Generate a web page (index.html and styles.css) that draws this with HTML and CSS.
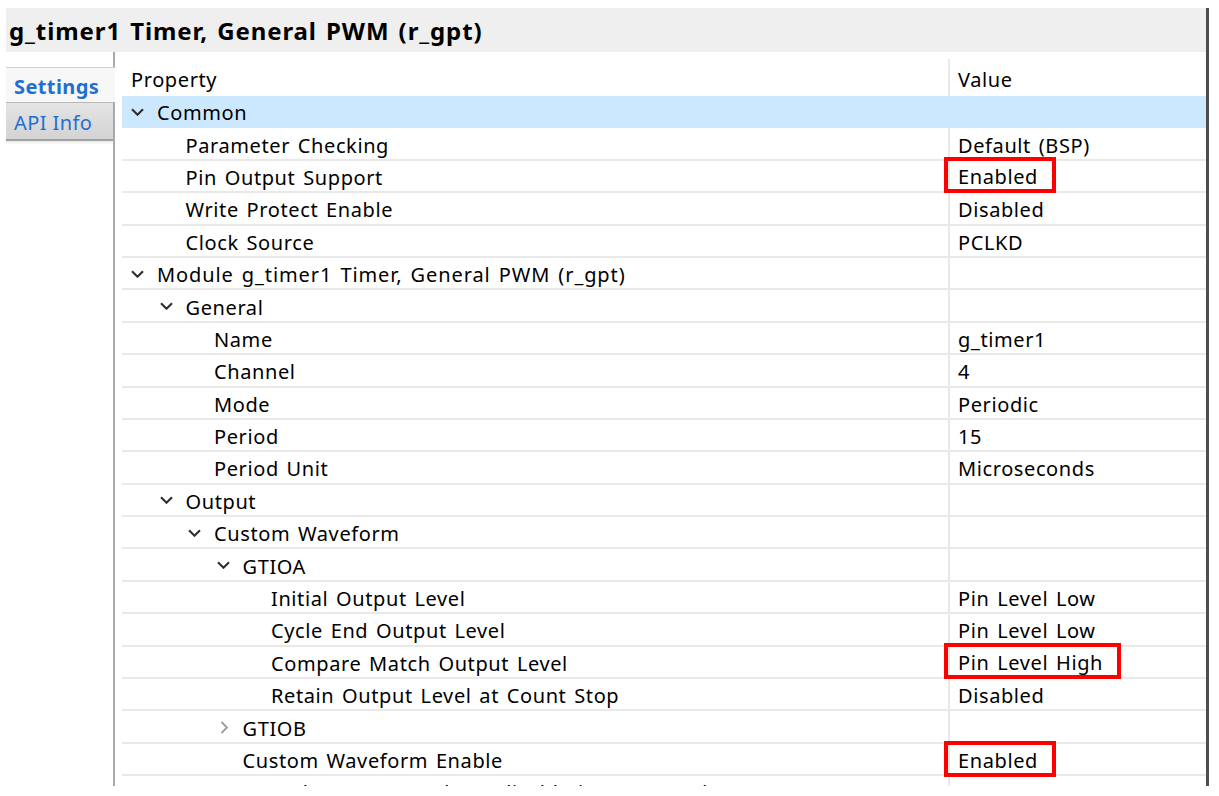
FILE: index.html
```html
<!DOCTYPE html>
<html>
<head>
<meta charset="utf-8">
<link rel="stylesheet" href="styles.css">
</head>
<body>
<div class="panel">
  <div class="title">g_timer1 Timer, General PWM (r_gpt)</div>
  <div class="main">
    <div class="tabs">
      <div class="tab active">Settings</div>
      <div class="tab api">API Info</div>
    </div>
    <div class="table">
      <div class="head">
        <div class="prop">Property</div>
        <div class="val">Value</div>
      </div>

      <div class="row sel lv0"><div class="prop"><span class="tg"><svg class="down" width="13" height="8" viewBox="0 0 13 8"><path d="M1 1.2 6.5 6.7 12 1.2"/></svg></span><span>Common</span></div><div class="val"></div></div>
      <div class="row lv1"><div class="prop"><span class="tg"></span><span>Parameter Checking</span></div><div class="val">Default (BSP)</div></div>
      <div class="row lv1"><div class="prop"><span class="tg"></span><span>Pin Output Support</span></div><div class="val"><span class="mark">Enabled</span></div></div>
      <div class="row lv1"><div class="prop"><span class="tg"></span><span>Write Protect Enable</span></div><div class="val">Disabled</div></div>
      <div class="row lv1"><div class="prop"><span class="tg"></span><span>Clock Source</span></div><div class="val">PCLKD</div></div>
      <div class="row lv0"><div class="prop"><span class="tg"><svg class="down" width="13" height="8" viewBox="0 0 13 8"><path d="M1 1.2 6.5 6.7 12 1.2"/></svg></span><span class="long">Module g_timer1 Timer, General PWM (r_gpt)</span></div><div class="val"></div></div>
      <div class="row lv1"><div class="prop"><span class="tg"><svg class="down" width="13" height="8" viewBox="0 0 13 8"><path d="M1 1.2 6.5 6.7 12 1.2"/></svg></span><span>General</span></div><div class="val"></div></div>
      <div class="row lv2"><div class="prop"><span class="tg"></span><span>Name</span></div><div class="val">g_timer1</div></div>
      <div class="row lv2"><div class="prop"><span class="tg"></span><span>Channel</span></div><div class="val">4</div></div>
      <div class="row lv2"><div class="prop"><span class="tg"></span><span>Mode</span></div><div class="val">Periodic</div></div>
      <div class="row lv2"><div class="prop"><span class="tg"></span><span>Period</span></div><div class="val">15</div></div>
      <div class="row lv2"><div class="prop"><span class="tg"></span><span>Period Unit</span></div><div class="val">Microseconds</div></div>
      <div class="row lv1"><div class="prop"><span class="tg"><svg class="down" width="13" height="8" viewBox="0 0 13 8"><path d="M1 1.2 6.5 6.7 12 1.2"/></svg></span><span>Output</span></div><div class="val"></div></div>
      <div class="row lv2"><div class="prop"><span class="tg"><svg class="down" width="13" height="8" viewBox="0 0 13 8"><path d="M1 1.2 6.5 6.7 12 1.2"/></svg></span><span>Custom Waveform</span></div><div class="val"></div></div>
      <div class="row lv3"><div class="prop"><span class="tg"><svg class="down" width="13" height="8" viewBox="0 0 13 8"><path d="M1 1.2 6.5 6.7 12 1.2"/></svg></span><span>GTIOA</span></div><div class="val"></div></div>
      <div class="row lv4"><div class="prop"><span class="tg"></span><span>Initial Output Level</span></div><div class="val">Pin Level Low</div></div>
      <div class="row lv4"><div class="prop"><span class="tg"></span><span>Cycle End Output Level</span></div><div class="val">Pin Level Low</div></div>
      <div class="row lv4"><div class="prop"><span class="tg"></span><span>Compare Match Output Level</span></div><div class="val"><span class="mark">Pin Level High</span></div></div>
      <div class="row lv4"><div class="prop"><span class="tg"></span><span>Retain Output Level at Count Stop</span></div><div class="val">Disabled</div></div>
      <div class="row lv3"><div class="prop"><span class="tg"><svg class="right" width="8" height="13" viewBox="0 0 8 13"><path d="M1.5 1 7 6.5 1.5 12"/></svg></span><span>GTIOB</span></div><div class="val"></div></div>
      <div class="row lv3"><div class="prop"><span class="tg"></span><span>Custom Waveform Enable</span></div><div class="val"><span class="mark">Enabled</span></div></div>
      <div class="row lv2"><div class="prop"><span class="tg"></span><span>Duty Cycle Percent (only applicable in PWM mode)</span></div><div class="val"></div></div>
    </div>
  </div>
</div>
</body>
</html>
```

FILE: styles.css
```css
body {
  margin: 0;
  background: #fff;
  color: #000;
  font-family: "Noto Sans", "Open Sans", sans-serif;
}

.panel {
  margin: 8px 0 0 6px;
  width: 1203px;
  height: 778px;
  box-sizing: border-box;
  border-right: 3px solid #4d4d4d;
  display: flex;
  flex-direction: column;
  overflow: hidden;
}

.title {
  flex: none;
  height: 44px;
  background: #efefef;
  font-weight: 700;
  font-size: 24px;
  letter-spacing: 0.9px;
  word-spacing: 2px;
  padding-left: 3px;
  display: flex;
  align-items: center;
}

.main {
  flex: 1;
  min-height: 0;
  display: flex;
}

.tabs {
  flex: none;
  width: 107px;
  border-right: 2px solid #ababab;
  padding-top: 15px;
}

.tab {
  font-size: 20px;
  color: #1f6fd3;
  padding-left: 8px;
  padding-top: 2px;
  display: flex;
  align-items: center;
  box-sizing: border-box;
  letter-spacing: 0.4px;
}

.tab.active {
  height: 35px;
  font-weight: 700;
  background: #f7f7f7;
  border-top: 1px solid #cfcfcf;
  margin-right: -2px;
}

.tab.api {
  height: 39px;
  background: linear-gradient(#e4e4e4, #d3d3d3);
  border-top: 1px solid #b8b8b8;
  border-bottom: 2px solid #a0a0a0;
  box-shadow: 0 2px 2px rgba(0, 0, 0, 0.08);
}

.table {
  flex: 1;
  min-width: 0;
  margin-left: 7px;
  display: flex;
  flex-direction: column;
  font-size: 20px;
  letter-spacing: 0.6px;
  word-spacing: 2px;
}

.long {
  letter-spacing: 0.9px;
}

.head {
  flex: none;
  height: 44px;
  display: flex;
}

.head .prop {
  flex: 1;
  padding-left: 9px;
  align-self: flex-end;
  line-height: 28px;
  padding-bottom: 2px;
}

.head .val {
  width: 258px;
  box-sizing: border-box;
  margin-top: 7px;
  border-left: 2px solid #e8e8e8;
  padding-left: 8px;
  display: flex;
  align-items: flex-end;
  line-height: 28px;
  padding-bottom: 2px;
}

.row {
  flex: none;
  height: 32.4px;
  box-sizing: border-box;
  border-bottom: 2px solid #e9e9e9;
  display: flex;
}

.row.sel {
  background: #cce8ff;
  border-bottom-color: #cce8ff;
}

.row .prop {
  flex: 1;
  display: flex;
  align-items: center;
  white-space: nowrap;
  padding-top: 3px;
}

.row .val {
  width: 258px;
  box-sizing: border-box;
  border-left: 2px solid #e8e8e8;
  padding-left: 8px;
  padding-top: 3px;
  display: flex;
  align-items: center;
  white-space: nowrap;
}

.row.sel .val {
  border-left-color: transparent;
}

.tg {
  flex: none;
  width: 26px;
  display: flex;
  align-items: center;
  margin-top: -2px;
}

.tg svg {
  fill: none;
  stroke-width: 2.1;
}

.tg .down {
  stroke: #2e2e2e;
}

.tg .right {
  stroke: #9a9a9a;
  stroke-width: 1.8;
  margin-left: 3px;
}

.lv0 .prop { padding-left: 9px; }
.lv1 .prop { padding-left: 37.5px; }
.lv2 .prop { padding-left: 66px; }
.lv3 .prop { padding-left: 94.5px; }
.lv4 .prop { padding-left: 123px; }

.mark {
  display: inline-block;
  border: 4px solid #ff0000;
  padding: 4px 14px 0 10px;
  margin-left: -14px;
  line-height: 24px;
  position: relative;
  top: -2px;
}
```
